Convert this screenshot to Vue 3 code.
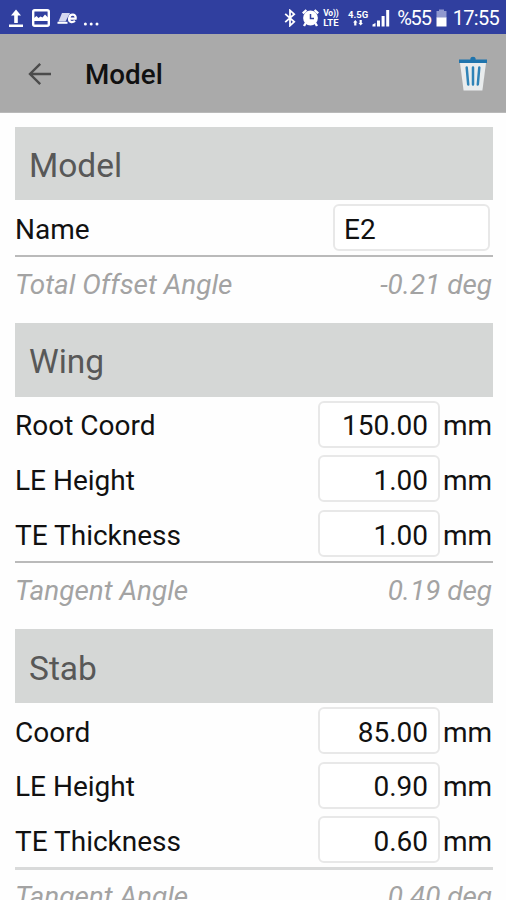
<template>
	<div class="screen">
		<div class="status-bar">
			<div class="status-left">
				<svg class="icon-upload" width="16" height="19" viewBox="0 0 16 19">
					<path d="M8 0.5 L13 6.5 H9.8 V14 H6.2 V6.5 H3 Z M1 15.5 H15 V18 H1 Z" fill="#fff" />
				</svg>
				<svg class="icon-image" width="18" height="18" viewBox="0 0 18 18">
					<rect x="1.2" y="1.2" width="15.6" height="15.6" rx="1.5" fill="none" stroke="#fff" stroke-width="2.4" />
					<path d="M2 9 L4.5 7 L6.5 9 L8.5 7.5 L10.5 8.5 L13 5.5 L16 8.5 V12 H2 Z" fill="#fff" />
				</svg>
				<svg class="icon-news" width="21" height="13" viewBox="0 0 21 13">
					<path d="M5 1 H13 L8.5 9.5 H1.5 Z" fill="#d4d7f0" />
					<path d="M0.5 10.8 H10.5" stroke="#fff" stroke-width="2" />
					<path d="M12 6.6 H18.6 C19.6 2 13.2 1 12.2 6 C11.4 10.6 15.5 10.8 18 8.8" fill="none" stroke="#fff" stroke-width="2.3" />
				</svg>
				<svg width="17" height="4" viewBox="0 0 17 4">
					<circle cx="2.4" cy="2" r="1.5" fill="#fff" />
					<circle cx="8.2" cy="2" r="1.5" fill="#fff" />
					<circle cx="14" cy="2" r="1.5" fill="#fff" />
				</svg>
			</div>
			<div class="status-right">
				<svg class="icon-bluetooth" width="12" height="18" viewBox="0 0 12 18">
					<path d="M1.2 4.8 L10.2 12.8 L6 16.6 V1.4 L10.2 5.2 L1.2 13.2" fill="none" stroke="#fff" stroke-width="1.8" />
				</svg>
				<svg class="icon-alarm" width="17" height="18" viewBox="0 0 17 18">
					<circle cx="8.5" cy="9" r="7.4" fill="#fff" />
					<path d="M0.8 4.4 L4.4 1 M12.6 1 L16.2 4.4 M3.8 14 L2 17 M13.2 14 L15 17" stroke="#fff" stroke-width="2.4" />
					<path d="M8.5 5 V9.5 H12" fill="none" stroke="#303f9f" stroke-width="1.5" />
				</svg>
				<div class="volte">
					<span>Vo))</span>
					<span>LTE</span>
				</div>
				<div class="network">
					<span>4.5G</span>
					<svg width="10" height="6" viewBox="0 0 10 6">
						<path d="M2.3 0 L4.5 2.5 H3.4 V5.5 H1.2 V2.5 H0.1 Z M7.7 5.5 L5.5 3 H6.6 V0 H8.8 V3 H9.9 Z" fill="#fff" />
					</svg>
				</div>
				<svg class="icon-signal" width="18" height="18" viewBox="0 0 18 18">
					<path d="M0.5 17.5 V15.5 L3.5 14 V17.5 Z M5 17.5 V11.5 H8 V17.5 Z M9.6 17.5 V7 H12.6 V17.5 Z M14.2 17.5 V1 H17.2 V17.5 Z" fill="#fff" />
				</svg>
				<span class="percent">%55</span>
				<svg class="icon-battery" width="11" height="18" viewBox="0 0 11 18">
					<path d="M3 0.5 H8 V2 H10.5 V9 H0.5 V2 H3 Z" fill="#9098cf" />
					<rect x="0.5" y="8.5" width="10" height="9" fill="#fff" />
				</svg>
				<span class="clock">17:55</span>
			</div>
		</div>

		<div class="toolbar">
			<svg class="back" width="24" height="24" viewBox="0 0 24 24">
				<path d="M23 12 H2 M12.2 1.8 L2 12 L12.2 22.2" fill="none" stroke="#4c4c4c" stroke-width="2.4" />
			</svg>
			<h1>Model</h1>
			<svg class="trash" width="30" height="36" viewBox="0 0 30 36">
				<path d="M2 7 H28 L24.4 34.5 H5.6 Z" fill="#e9eced" />
				<path d="M8.7 11.5 L10.2 28.5 M15 11.5 V28.5 M21.3 11.5 L19.8 28.5" fill="none" stroke="#2f83b7" stroke-width="2.5" stroke-linecap="round" />
				<path d="M1 3.6 H12.4 V2.4 Q12.4 0.8 15 0.8 Q17.6 0.8 17.6 2.4 V3.6 H29 V7 H1 Z" fill="#1f74ad" />
			</svg>
		</div>

		<div class="content">
			<section v-for="section in sections" :key="section.title" :class="section.cls">
				<h2>{{ section.title }}</h2>
				<div v-for="field in section.fields" :key="field.label" class="row">
					<label>{{ field.label }}</label>
					<input v-model="field.value" :class="field.unit ? 'number' : 'text'" type="text" />
					<span v-if="field.unit" class="unit">{{ field.unit }}</span>
				</div>
				<div class="result">
					<span>{{ section.result.label }}</span>
					<span>{{ section.result.value }} deg</span>
				</div>
			</section>
		</div>
	</div>
</template>

<script setup>
import { reactive } from "vue";

const sections = reactive([
	{
		title: "Model",
		cls: "model",
		fields: [{ label: "Name", value: "E2" }],
		result: { label: "Total Offset Angle", value: "-0.21" },
	},
	{
		title: "Wing",
		cls: "wing",
		fields: [
			{ label: "Root Coord", value: "150.00", unit: "mm" },
			{ label: "LE Height", value: "1.00", unit: "mm" },
			{ label: "TE Thickness", value: "1.00", unit: "mm" },
		],
		result: { label: "Tangent Angle", value: "0.19" },
	},
	{
		title: "Stab",
		cls: "stab",
		fields: [
			{ label: "Coord", value: "85.00", unit: "mm" },
			{ label: "LE Height", value: "0.90", unit: "mm" },
			{ label: "TE Thickness", value: "0.60", unit: "mm" },
		],
		result: { label: "Tangent Angle", value: "0.40" },
	},
]);
</script>

<style>
body {
	margin: 0;
	overflow: hidden;
}
</style>

<style scoped>
.screen {
	width: 506px;
	height: 900px;
	overflow: hidden;
	background: #fefefe;
	font-family: Roboto, sans-serif;
	color: #111;
}

.status-bar {
	display: flex;
	justify-content: space-between;
	height: 34px;
	padding: 0 7px 0 8px;
	background: #303f9f;
	color: #fff;
}

.status-left,
.status-right {
	display: flex;
	align-items: center;
	height: 36px;
}

.icon-image {
	margin-left: 8px;
}

.icon-news {
	margin: 0 5px 0 7px;
}

.status-left svg:last-child {
	margin-top: 12px;
}

.icon-alarm {
	margin-left: 6px;
}

.volte {
	display: flex;
	flex-direction: column;
	width: 18px;
	margin-left: 4px;
	font-size: 9.5px;
	font-weight: 700;
	line-height: 10px;
	white-space: nowrap;
}

.volte span:first-child {
	font-size: 8.5px;
	line-height: 9px;
	letter-spacing: -0.2px;
}

.network {
	display: flex;
	flex-direction: column;
	align-items: center;
	width: 20px;
	margin-left: 7px;
	font-size: 9.5px;
	font-weight: 700;
	line-height: 10px;
}

.icon-signal {
	margin-left: 4px;
}

.percent {
	margin-left: 7px;
	font-size: 20px;
	letter-spacing: -1.2px;
}

.icon-battery {
	margin-left: 5px;
}

.clock {
	margin-left: 6px;
	font-size: 20px;
	letter-spacing: -0.7px;
}

.toolbar {
	display: flex;
	align-items: center;
	height: 78px;
	padding: 0 18px 0 28px;
	background: #aaa;
	border-bottom: 1px solid #b9b9b9;
}

.back {
	margin-top: 1px;
}

.toolbar h1 {
	flex: 1;
	margin: 3px 0 0 33px;
	font-size: 27.8px;
	font-weight: 500;
	line-height: 32px;
}

.trash {
	margin-top: 1px;
}

.content {
	padding: 14px 13px 0 15px;
}

section {
	margin-bottom: 11px;
}

h2 {
	box-sizing: border-box;
	height: 74px;
	margin: 0;
	padding: 2px 14px 0;
	background: #d5d7d6;
	color: #585858;
	font-size: 33.5px;
	font-weight: 400;
	line-height: 74px;
}

.row {
	display: flex;
	align-items: center;
	height: 54.8px;
	font-size: 28px;
}

.row label {
	flex: 1;
	padding-top: 3px;
}

input {
	box-sizing: border-box;
	height: 47px;
	margin: 0;
	padding: 3px 9px 0;
	border: 2px solid #e8e8e8;
	border-radius: 6px;
	outline: none;
	background: #fff;
	color: #111;
	font: inherit;
}

input.text {
	width: 157px;
	margin-right: 3px;
}

input.number {
	width: 122px;
	padding-right: 10px;
	text-align: right;
}

.unit {
	width: 50px;
	margin-left: 3px;
	padding-top: 3px;
}

.result {
	display: flex;
	justify-content: space-between;
	height: 55px;
	padding-right: 1px;
	border-top: 2px solid #bababa;
	color: #a3a3a3;
	font-size: 27.9px;
	font-style: italic;
	line-height: 55px;
}

.model .row label,
.model input {
	padding-top: 5px;
}

.model h2 {
	height: 73px;
}

.stab h2 {
	height: 74px;
	padding-top: 3px;
}

.stab .row {
	height: 54.7px;
}

.stab .result {
	border-top: 3px solid #d9dada;
	line-height: 54px;
}
</style>
